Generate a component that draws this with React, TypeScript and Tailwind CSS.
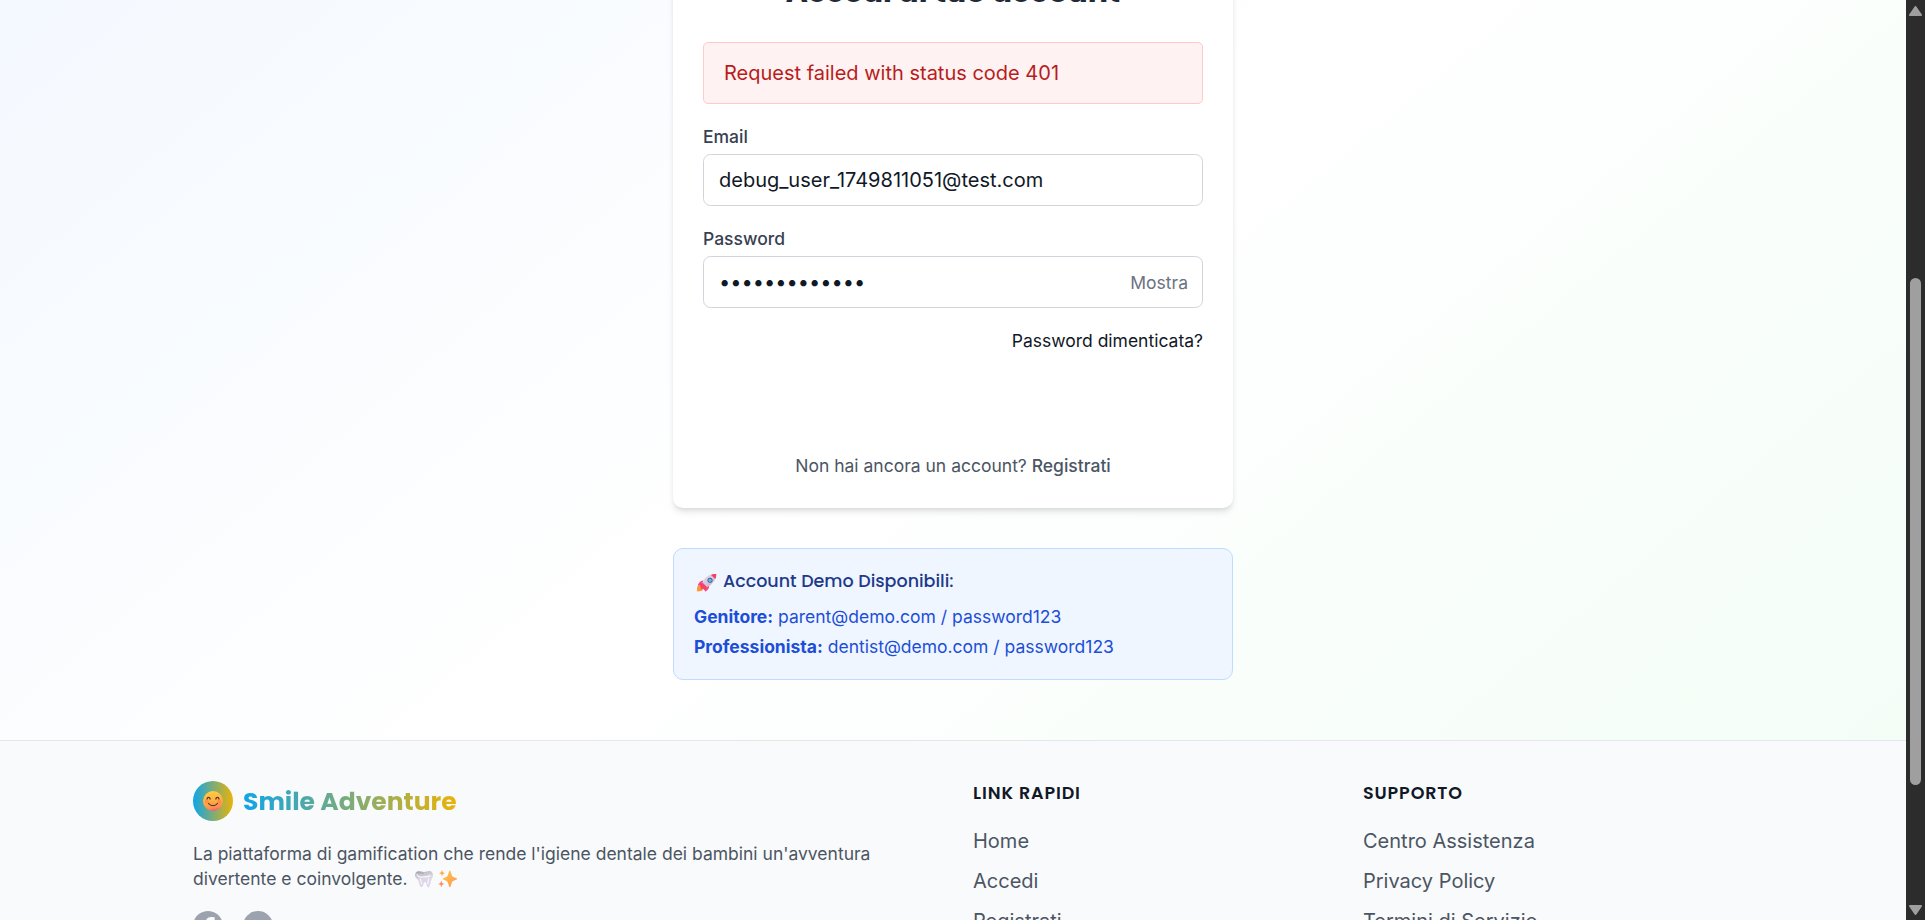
const poppins = '[font-family:Poppins,Inter,sans-serif]';

const links: { title: string; items: string[] }[] = [
  { title: 'Link Rapidi', items: ['Home', 'Accedi', 'Registrati'] },
  { title: 'Supporto', items: ['Centro Assistenza', 'Privacy Policy', 'Termini di Servizio'] },
];

function Rocket() {
  return (
    <svg viewBox="0 0 24 24" className="mr-1 inline-block h-[19.2px] w-[19.2px] shrink-0" aria-hidden="true">
      <defs>
        <linearGradient id="rocket-body" x1="0" y1="0" x2="1" y2="1">
          <stop offset="0" stopColor="#e9e3ee" />
          <stop offset="1" stopColor="#b9abc2" />
        </linearGradient>
      </defs>
      <path d="M3.2 16.5 7 15l2.6 2.6-1.3 3.2-4.6.6c-.8 0-.9-.2-.8-.9z" fill="#ff9a2e" />
      <path d="M9.8 10.6c-3 .1-5 1.7-6 4.6-.1.5.2.6.7.5l3.9-1.2zM15.2 15.6c.1 2.6-1.2 4.7-3.6 5.8-.6.2-.8 0-.7-.6l.3-3.4z" fill="#f8457a" />
      <path d="M21.6 4.1c.6 4.400-1.600 8-5 10.900l-5.300 3.300-4-4 3-5.200C13.200 5.700 17 3.500 21.600 4.100z" fill="url(#rocket-body)" />
      <path d="M17 4.900c1.500-.7 3-1 4.600-.8.7.1.7.3.7 1 0 1.300-.3 2.500-.9 3.800z" fill="#f5405f" />
      <path d="m5.500 14.200 3.200-1.400 4.200 4.200-2 3.400-2.200-1.800-2.200 1.200.4-2.500z" fill="#f43f72" />
      <circle cx="16" cy="10.300" r="2.500" fill="#41577f" />
      <circle cx="16" cy="10.300" r="1.700" fill="#65b5fa" />
    </svg>
  );
}

function Tooth() {
  return (
    <svg viewBox="0 0 24 24" className="inline-block h-[19.2px] w-[19.2px] align-[-4.5px]" aria-hidden="true">
      <defs>
        <linearGradient id="tooth-fill" x1="0.300" y1="0" x2="0.600" y2="1">
          <stop offset="0" stopColor="#b7b2bd" />
          <stop offset="0.450" stopColor="#dcd8e3" />
          <stop offset="1" stopColor="#e4d3f5" />
        </linearGradient>
      </defs>
      <path
        d="M3 8.200C3 5.500 4.800 4 7 4c1.800 0 3 .9 5 .9S15.400 4 17.200 4C19.700 4 21 5.800 21 8c0 2.200-1.300 3.800-2 5.600-.8 2.300-.8 6.900-2.700 6.900-1.700 0-1.600-3.500-2.400-5-.4-.8-1.400-.8-1.800 0-.8 1.500-.7 4.500-2.400 4.500-2.300 0-2.500-3.900-3.300-6.300C5.700 11.800 3 11 3 8.200z"
        fill="url(#tooth-fill)"
      />
      <path d="M5 7.800c1.200 2.300 3 2.500 5.200 2.200 2.600-.4 5.300.4 7.800-1.300M8.500 12l1.100 5M16.700 11.700l-.9 5" fill="none" stroke="#fff" strokeWidth="1.100" strokeLinecap="round" opacity=".85" />
      <path d="M5 5.700c1.900-.9 3.500.8 6.900.5" fill="none" stroke="#96919c" strokeWidth=".8" opacity=".7" />
    </svg>
  );
}

function Sparkles() {
  return (
    <svg viewBox="0 0 24 24" className="inline-block h-[19.2px] w-[19.2px] align-[-4.5px]" aria-hidden="true">
      <defs>
        <linearGradient id="sparkle-fill" x1="0" y1="0" x2="1" y2="1">
          <stop offset="0" stopColor="#ffca4a" />
          <stop offset="1" stopColor="#ff9550" />
        </linearGradient>
      </defs>
      <path d="M13.800 3.500c.4 0 .6.300.8.900l1.300 4.200c.2.600.5.900 1.100 1.200l3.500 1.400c1 .4 1 1 0 1.400l-3.500 1.400c-.6.300-.9.600-1.100 1.200l-1.300 4.200c-.3 1-1.100 1-1.500 0l-1.400-4.200c-.2-.6-.5-.9-1.100-1.200l-3.200-1.400c-.9-.4-.9-1 0-1.400l3.200-1.400c.6-.3.9-.6 1.100-1.200l1.400-4.200c.200-.6.400-.9.700-.9z" fill="url(#sparkle-fill)" />
      <path d="m6 3 .9 2.300L9 6.200l-2.100.9L6 9.300l-.9-2.200L3 6.200l2.100-.9z" fill="#ffa94a" />
      <path d="m5.300 13.500.9 2.500 2.300.9-2.300.9-.9 2.500-.9-2.500-2.200-.9 2.200-.9z" fill="#ff8c5a" />
    </svg>
  );
}

function Smiley() {
  return (
    <svg viewBox="0 0 20 20" className="size-4" aria-hidden="true">
      <defs>
        <linearGradient id="smiley-fill" x1="0.350" y1="0" x2="0.550" y2="1">
          <stop offset="0" stopColor="#ffce45" />
          <stop offset="0.600" stopColor="#ffa83f" />
          <stop offset="0.850" stopColor="#ff8a55" />
          <stop offset="1" stopColor="#f5557f" />
        </linearGradient>
      </defs>
      <circle cx="10" cy="10" r="10" fill="url(#smiley-fill)" />
      <circle cx="3.800" cy="10.600" r="2" fill="#ff7a50" opacity=".55" />
      <circle cx="16.200" cy="10.600" r="2" fill="#ff7a50" opacity=".55" />
      <g fill="none" stroke="#553238" strokeWidth="1.250" strokeLinecap="round">
        <path d="M4 8c.4-2.300 2.700-2.300 3.200 0M12.800 8c.5-2.300 2.800-2.300 3.200 0M5.600 12.500c2 2.800 6.800 2.800 8.800 0" />
      </g>
    </svg>
  );
}

function LoginCard() {
  return (
    <div className="w-[448px] rounded-lg bg-white p-6 shadow-md">
      <h2 className={`mb-6 text-center text-2xl font-bold text-[#1f2937] ${poppins}`}>
        Accedi al tuo account
      </h2>
      <div className="mb-4 rounded border border-[#fecaca] bg-[#fef2f2] px-4 py-3 text-[#b91c1c]">
        Request failed with status code 401
      </div>
      <label className="mb-1 block text-sm font-medium text-[#374151]">Email</label>
      <div className="mb-4 rounded-md border border-[#d1d5db] px-3 py-2 text-[#111827]">
        debug_user_1749811051@test.com
      </div>
      <label className="mb-1 block text-sm font-medium text-[#374151]">Password</label>
      <div className="mb-4 flex h-[41.6px] items-center justify-between rounded-md border border-[#d1d5db] pr-[11.2px] pl-3">
        <span className="text-[#111827]">•••••••••••••</span>
        <span className="text-sm text-[#6b7280]">Mostra</span>
      </div>
      <div className="mb-4 text-right text-sm text-[#111827]">Password dimenticata?</div>
      <div className="h-10" />
      <p className="mt-6 text-center text-sm text-[#4b5563]">
        Non hai ancora un account? <span className="font-medium">Registrati</span>
      </p>
    </div>
  );
}

function DemoAccounts() {
  return (
    <div className="mt-8 w-[448px] rounded-lg border border-[#bfdbfe] bg-[#eff6ff] p-4 text-sm text-[#1d4ed8]">
      <h3 className={`mb-2 flex h-5 items-center font-medium text-[#1e3a8a] ${poppins}`}>
        <Rocket />
        Account Demo Disponibili:
      </h3>
      <p className="mb-1"><strong>Genitore:</strong> parent@demo.com / password123</p>
      <p><strong>Professionista:</strong> dentist@demo.com / password123</p>
    </div>
  );
}

function Footer() {
  return (
    <footer className="h-[600px] border-t border-[#e5e7eb] bg-[#f9fafb]">
      <div className="mx-auto grid max-w-7xl grid-cols-4 gap-8 px-8 py-8">
        <div className="col-span-2">
          <div className="mb-4 flex h-8 items-center gap-2">
            <div className="flex size-8 items-center justify-center rounded-full bg-linear-to-r/srgb from-[#0ea5e9] to-[#eab308]">
              <Smiley />
            </div>
            <span className={`bg-linear-to-r/srgb from-[#0ea5e9] to-[#eab308] bg-clip-text text-xl font-bold text-transparent ${poppins}`}>
              Smile Adventure
            </span>
          </div>
          <p className="h-10 text-sm text-[#4b5563]">
            La piattaforma di gamification che rende l'igiene dentale dei bambini un'avventura divertente e coinvolgente.{' '}
            <Tooth />
            <Sparkles />
          </p>
          <div className="mt-4 flex gap-4 text-[#9ca3af]">
            <svg viewBox="0 0 24 24" className="size-6" fill="currentColor" aria-hidden="true">
              <path d="M24 12.073c0-6.627-5.373-12-12-12s-12 5.373-12 12c0 5.990 4.388 10.954 10.125 11.854v-8.385H7.078v-3.470h3.047V9.430c0-3.007 1.792-4.669 4.533-4.669 1.312 0 2.686.235 2.686.235v2.953H15.830c-1.491 0-1.956.925-1.956 1.874v2.250h3.328l-.532 3.470h-2.796v8.385C19.612 23.027 24 18.062 24 12.073z" />
            </svg>
            <svg viewBox="0 0 24 24" className="size-6" aria-hidden="true">
              <circle cx="12" cy="12" r="12" fill="currentColor" />
              <circle cx="12" cy="12.500" r="3.500" fill="none" stroke="#f9fafb" strokeWidth="1.500" />
            </svg>
          </div>
        </div>
        {links.map((group) => (
          <div key={group.title}>
            <h3 className={`mb-4 text-sm font-semibold tracking-wider text-[#111827] uppercase ${poppins}`}>{group.title}</h3>
            <ul className="space-y-2 text-[#4b5563]">
              {group.items.map((item) => (
                <li key={item}>{item}</li>
              ))}
            </ul>
          </div>
        ))}
      </div>
    </footer>
  );
}

function Scrollbar() {
  return (
    <div className="flex w-[19px] shrink-0 flex-col items-center bg-[#2c2c2c] pt-[6px] pb-[5px]">
      <svg viewBox="0 0 13 10" className="h-[10px] w-[13px] shrink-0" aria-hidden="true">
        <path d="M6.500 1 12 9H1z" fill="#9f9f9f" stroke="#9f9f9f" strokeWidth="2" strokeLinejoin="round" />
      </svg>
      <div className="mt-[262px] h-[507px] w-[11px] shrink-0 rounded-full bg-[#9f9f9f]" />
      <svg viewBox="0 0 13 10" className="mt-auto h-[10px] w-[13px] shrink-0" aria-hidden="true">
        <path d="M6.500 9 12 1H1z" fill="#9f9f9f" stroke="#9f9f9f" strokeWidth="2" strokeLinejoin="round" />
      </svg>
    </div>
  );
}

export default function App() {
  return (
    <div className="flex h-[920px] w-[1925px] overflow-hidden">
      <div className="h-[736px] w-[1524.8px] shrink-0 overflow-hidden font-[Inter,sans-serif] [zoom:1.25]">
        <div className="-mt-[376.8px] h-[1283.2px] overflow-hidden bg-linear-to-br/srgb from-[#eff6ff] via-white to-[#f0fdf4]">
          <main className="flex h-[968.8px] flex-col items-center justify-end pb-12">
            <LoginCard />
            <DemoAccounts />
          </main>
          <Footer />
        </div>
      </div>
      <Scrollbar />
    </div>
  );
}
